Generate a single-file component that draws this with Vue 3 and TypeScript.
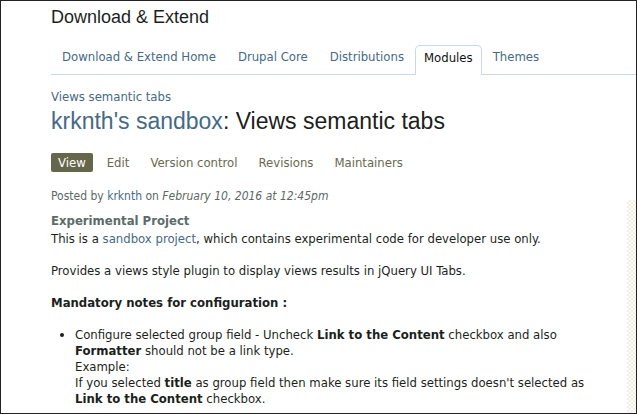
<script setup lang="ts">
interface NavItem {
  label: string
  active?: boolean
}

const sections: NavItem[] = [
  { label: 'Download & Extend Home' },
  { label: 'Drupal Core' },
  { label: 'Distributions' },
  { label: 'Modules', active: true },
  { label: 'Themes' },
]

const views: NavItem[] = [
  { label: 'View', active: true },
  { label: 'Edit' },
  { label: 'Version control' },
  { label: 'Revisions' },
  { label: 'Maintainers' },
]
</script>

<template>
  <div class="page">
    <header>
      <h2 class="site-title">Download &amp; Extend</h2>
      <nav class="sections" aria-label="Sections">
        <a v-for="s in sections" :key="s.label" href="#" :class="{ active: s.active }">{{ s.label }}</a>
      </nav>
    </header>
    <div class="body">
      <main>
        <a class="crumb" href="#">Views semantic tabs</a>
        <h1><a href="#">krknth's sandbox</a>: Views semantic tabs</h1>
        <nav class="views" aria-label="Project pages">
          <a v-for="v in views" :key="v.label" href="#" :class="{ active: v.active }">{{ v.label }}</a>
        </nav>
        <p class="meta">Posted by <a href="#">krknth</a> on <em>February 10, 2016 at 12:45pm</em></p>
        <h3>Experimental Project</h3>
        <p>This is a <a href="#">sandbox project</a>, which contains experimental code for developer use only.</p>
        <p>Provides a views style plugin to display views results in jQuery UI Tabs.</p>
        <p><strong>Mandatory notes for configuration :</strong></p>
        <ul>
          <li>
            Configure selected group field - Uncheck <strong>Link to the Content</strong> checkbox and also
            <strong>Formatter</strong> should not be a link type.<br />
            Example:<br />
            If you selected <strong>title</strong> as group field then make sure its field settings doesn't selected as
            <strong>Link to the Content</strong> checkbox.
          </li>
        </ul>
      </main>
      <aside></aside>
    </div>
  </div>
</template>

<style>
body {
  background: #fff;
}
</style>

<style scoped>
.page {
  box-sizing: border-box;
  min-height: 100vh;
  display: flex;
  flex-direction: column;
  border: 1px solid #222;
  padding-left: 50px;
  color: #1c1f1c;
  font: 13px/16px "DejaVu Sans Condensed", "DejaVu Sans", sans-serif;
}
a {
  color: #456a87;
  text-decoration: none;
}
.site-title {
  margin: 0;
  padding-top: 5px;
  font: 18px/22px "Liberation Sans", sans-serif;
}
.sections {
  display: flex;
  margin-top: 17px;
  border-bottom: 1px solid #c5dae6;
}
.sections a {
  padding: 4px 11px 9px;
  white-space: nowrap;
}
.sections .active {
  margin-bottom: -1px;
  padding: 4px 8px 9px;
  border: 1px solid #c5dae6;
  border-bottom: 0;
  border-radius: 5px 5px 0 0;
  background: #fff;
  color: #111;
}
.body {
  flex: 1;
  display: flex;
}
main {
  flex: 1;
  padding: 14px 32px 0 0;
}
.crumb {
  display: block;
}
h1 {
  margin: 0;
  font: 23px/32px "Liberation Sans", sans-serif;
}
.views {
  display: flex;
  gap: 7px;
  margin: 16px 0;
}
.views a {
  padding: 2px 7px 1px;
  border-radius: 2px;
  color: #68694e;
}
.views .active {
  background: #66664a;
  color: #fff;
}
p {
  margin: 0 0 16px;
}
.meta {
  margin: 0 0 8px;
  font-size: 12px;
  color: #5c6866;
}
h3 {
  margin: 0 0 1px;
  font-size: 13px;
  line-height: 18px;
  color: #5c6c6a;
}
ul {
  margin: 0;
  padding-left: 24px;
}
aside {
  width: 9px;
  margin-top: 125px;
  background: repeating-conic-gradient(#f2f0e2 0 25%, #fdfdfb 0 50%) 0 0 / 4px 4px;
}
</style>
